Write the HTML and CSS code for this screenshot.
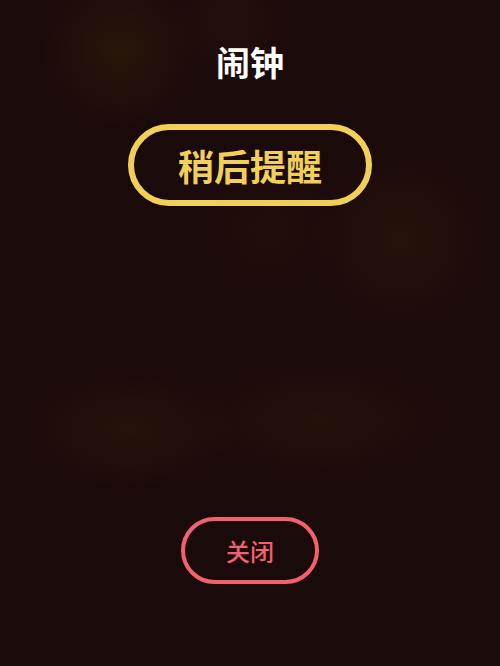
FILE: index.html
```html
<!DOCTYPE html>
<html lang="zh-CN">
  <head>
    <meta charset="UTF-8" />
    <meta name="viewport" content="width=device-width, initial-scale=1.0" />
    <title>闹钟</title>
    <link rel="stylesheet" href="styles.css">
  </head>
  <body>
    <div class="alarm-screen">
      <h1 class="alarm-title">闹钟</h1>
      <button class="snooze-btn">稍后提醒</button>
      <div class="spacer"></div>
      <button class="close-btn">关闭</button>
    </div>
  </body>
</html>
```

FILE: styles.css
```css
html,
body {
  margin: 0;
  height: 100%;
}

body {
  font-family: "Noto Sans CJK SC", "Noto Sans", sans-serif;
  background-color: #1b0a0a;
  background-image:
    radial-gradient(circle at 120px 50px, rgba(60, 40, 10, 0.4), rgba(60, 40, 10, 0) 80px),
    radial-gradient(circle at 230px 20px, rgba(50, 35, 10, 0.3), rgba(50, 35, 10, 0) 60px),
    radial-gradient(circle at 400px 240px, rgba(55, 38, 10, 0.35), rgba(55, 38, 10, 0) 90px),
    radial-gradient(ellipse 110px 60px at 130px 430px, rgba(55, 38, 10, 0.35), rgba(55, 38, 10, 0) 100%),
    radial-gradient(ellipse 130px 60px at 320px 420px, rgba(55, 38, 10, 0.3), rgba(55, 38, 10, 0) 100%),
    radial-gradient(circle at 270px 230px, rgba(45, 30, 10, 0.25), rgba(45, 30, 10, 0) 70px);
  overflow: hidden;
}

.alarm-screen {
  display: flex;
  flex-direction: column;
  align-items: center;
  height: 666px;
  box-sizing: border-box;
  padding-top: 38px;
}

.alarm-title {
  margin: 0;
  color: #ffffff;
  font-size: 34px;
  font-weight: 700;
  line-height: 48px;
}

.snooze-btn {
  margin-top: 38px;
  width: 244px;
  height: 82px;
  border: 6px solid #f1d05a;
  border-radius: 41px;
  background: transparent;
  color: #f1d05a;
  font-family: inherit;
  font-size: 36px;
  font-weight: 700;
  padding: 0;
}

.spacer {
  height: 311px;
}

.close-btn {
  width: 138px;
  height: 67px;
  border: 4px solid #f2616f;
  border-radius: 34px;
  background: transparent;
  color: #f2616f;
  font-family: inherit;
  font-size: 24px;
  font-weight: 500;
  padding: 0;
}
```
